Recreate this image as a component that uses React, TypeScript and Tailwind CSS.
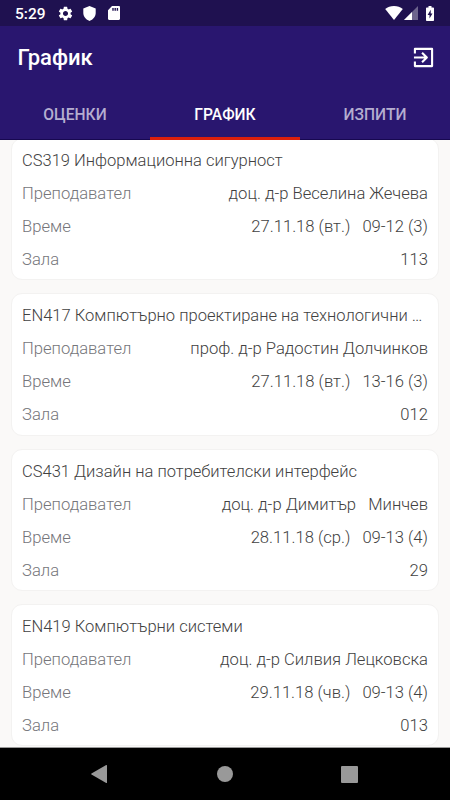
import { MdSettings } from "react-icons/md";

interface ILecture {
  title: string;
  lecturer: string;
  date: string;
  hours: string;
  room: string;
}

const lectures: ILecture[] = [
  {
    title: "CS319 Информационна сигурност",
    lecturer: "доц. д-р Веселина Жечева",
    date: "27.11.18 (вт.)",
    hours: "09-12 (3)",
    room: "113",
  },
  {
    title: "EN417 Компютърно проектиране на технологични …",
    lecturer: "проф. д-р Радостин Долчинков",
    date: "27.11.18 (вт.)",
    hours: "13-16 (3)",
    room: "012",
  },
  {
    title: "CS431 Дизайн на потребителски интерфейс",
    lecturer: "доц. д-р Димитър   Минчев",
    date: "28.11.18 (ср.)",
    hours: "09-13 (4)",
    room: "29",
  },
  {
    title: "EN419 Компютърни системи",
    lecturer: "доц. д-р Силвия Лецковска",
    date: "29.11.18 (чв.)",
    hours: "09-13 (4)",
    room: "013",
  },
];

const tabs = ["ОЦЕНКИ", "ГРАФИК", "ИЗПИТИ"];

const StatusBar = () => (
  <div className="flex h-[26px] shrink-0 items-center bg-[#1f1150] pl-[15px] pr-[16px] text-white">
    <span className="w-[42px] pt-[2px] text-[15.5px] font-medium leading-[24px]">5:29</span>
    <MdSettings size={17} />
    <svg className="ml-[9px]" width="13" height="15" viewBox="0 0 13 15" fill="currentColor">
      <path d="M6.5 0 .3 2.5v4.6c0 3.6 2.6 6.7 6.2 7.9 3.6-1.2 6.2-4.3 6.2-7.9V2.5z" />
    </svg>
    <svg className="ml-[12px]" width="12" height="14" viewBox="0 0 12 14" fill="currentColor">
      <path
        fillRule="evenodd"
        d="M4 0h6.8C11.5 0 12 .5 12 1.2v11.6c0 .7-.5 1.2-1.2 1.2H1.2C.5 14 0 13.5 0 12.8V4.2zM4.3 2v2.7h1.4V2zm2.2 0v2.7h1.4V2zm2.2 0v2.7h1.4V2z"
      />
    </svg>
    <svg className="ml-auto" width="18" height="14" viewBox="0 0 18 14" fill="currentColor">
      <path d="M9 14 .2 3.1C2.5 1.1 5.6 0 9 0s6.5 1.1 8.8 3.1z" />
    </svg>
    <svg className="ml-[1px]" width="14" height="14" viewBox="0 0 14 14" fill="currentColor">
      <path d="M0 14 14 0v14z" opacity="0.35" />
      <path d="M0 14 8 6v8z" />
    </svg>
    <svg className="ml-[8px]" width="8" height="15" viewBox="0 0 8 15">
      <path
        fill="currentColor"
        d="M2.5 0h3v1.4h1.7c.5 0 .8.3.8.8v12c0 .5-.3.8-.8.8H.8c-.5 0-.8-.3-.8-.8v-12c0-.5.3-.8.8-.8h1.7z"
      />
      <path fill="#1f1150" d="M4.7 3.8 1.6 8.9h1.9v3.7l3-5.1H4.7z" />
    </svg>
  </div>
);

const Header = () => (
  <header className="flex h-[114px] shrink-0 flex-col bg-[#29166f]">
    <div className="flex h-[63px] items-center justify-between pl-[17.5px] pr-[16px] text-white">
      <h1 className="text-[22px] font-medium">График</h1>
      <button>
        <svg
          width="21"
          height="21"
          viewBox="0 0 22 22"
          fill="none"
          stroke="currentColor"
          strokeWidth="2.2"
          strokeLinejoin="round"
        >
          <path d="M2 6.8V2h18v18H2v-4.8M1 11h13M9.5 6l5 5-5 5" />
        </svg>
      </button>
    </div>
    <nav className="flex flex-1">
      {tabs.map((tab) => (
        <button
          key={tab}
          className={`flex-1 pt-[4px] text-[15.6px] font-medium leading-[44px] ${
            tab === "ГРАФИК"
              ? "border-b-[3px] border-[#dc1f0c] text-white"
              : "border-b border-[#170850] pb-[2px] text-[#b5aed0]"
          }`}
        >
          {tab}
        </button>
      ))}
    </nav>
  </header>
);

const Row = ({ label, children }: { label: string; children: React.ReactNode }) => (
  <div className="flex h-[33.1px] items-center justify-between">
    <span className="text-[#75757a]">{label}</span>
    <span className="whitespace-pre">{children}</span>
  </div>
);

const LectureCard = ({ lecture }: { lecture: ILecture }) => (
  <li className="h-[142.3px] shrink-0 rounded-[11px] border border-[#f3f2f1] bg-white px-[10px] pt-[5px]">
    <p className="h-[33.9px] whitespace-nowrap text-[16.55px] leading-[33px]">
      {lecture.title}
    </p>
    <Row label="Преподавател">{lecture.lecturer}</Row>
    <Row label="Време">
      {lecture.date}
      <span className="ml-3">{lecture.hours}</span>
    </Row>
    <Row label="Зала">{lecture.room}</Row>
  </li>
);

const NavigationBar = () => (
  <div className="flex h-[53px] shrink-0 items-center justify-between border-t border-[#999] bg-black pl-[91px] pr-[92px] text-[#999]">
    <svg width="16" height="18" viewBox="0 0 16 18" fill="currentColor">
      <path d="M15.2.1c.5-.2.8 0 .8.5v16.8c0 .5-.3.7-.8.5L.5 9.5c-.5-.3-.5-.7 0-1z" />
    </svg>
    <span className="ml-px size-[16px] rounded-full bg-[#999]" />
    <span className="size-[17px] rounded-[1px] bg-[#999]" />
  </div>
);

const App = () => {
  return (
    <div className="flex h-[800px] w-[450px] flex-col overflow-hidden bg-[#faf9f8] font-['Roboto',sans-serif]">
      <StatusBar />
      <Header />
      <main className="min-h-0 flex-1 overflow-hidden px-[11px]">
        <ul className="-mt-[2px] flex flex-col gap-[13px] text-[16.62px] font-light text-[#414141]">
          {lectures.map((lecture) => (
            <LectureCard key={lecture.title} lecture={lecture} />
          ))}
        </ul>
      </main>
      <NavigationBar />
    </div>
  );
};

export default App;
